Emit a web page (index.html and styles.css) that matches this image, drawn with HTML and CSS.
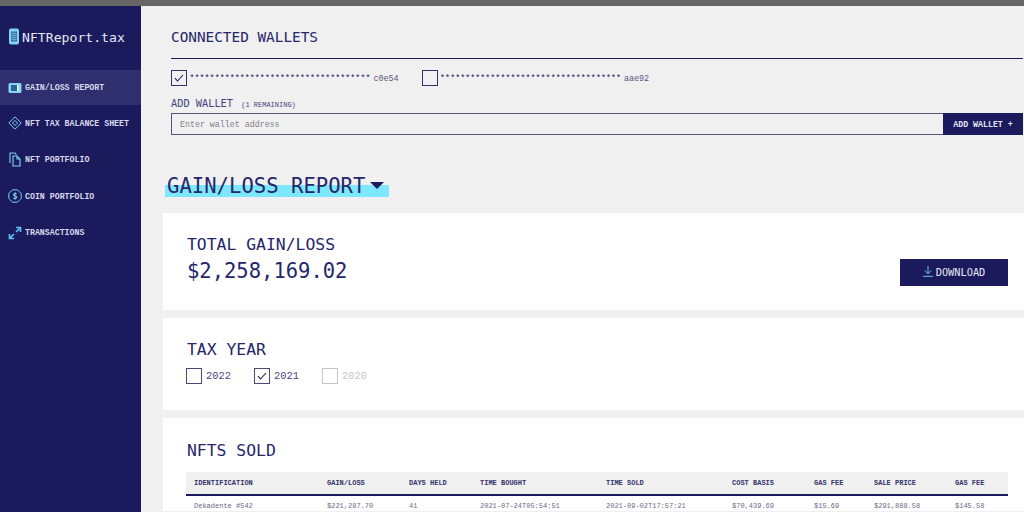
FILE: index.html
```html
<!DOCTYPE html>
<html lang="en">
<head>
<meta charset="utf-8">
<title>NFTReport.tax</title>
<link rel="stylesheet" href="styles.css">
</head>
<body>
<div class="topbar"></div>
<div class="shell">
  <aside class="sidebar">
    <div class="logo">
      <svg class="logo-icon" width="12" height="17" viewBox="0 0 12 17" fill="none"><rect x="1" y="0.5" width="10" height="16" rx="2" fill="#7fd6ee"/><rect x="3" y="3.5" width="6" height="10" fill="#35609a"/><path d="M3 5.5h6M3 7.5h6M3 9.5h6M3 11.5h6M5 3.5v10M7 3.5v10" stroke="#7fd6ee" stroke-width=".5"/></svg>
      <span>NFTReport.tax</span>
    </div>
    <nav class="nav">
      <a class="nav-item active">
        <svg width="14" height="12" viewBox="0 0 14 12" fill="none"><rect x=".5" y="1" width="13" height="10" rx="1.5" fill="#7fd6ee"/><rect x="3" y="3" width="6" height="6" fill="#2d5f9c"/><rect x="9" y="3" width="1.5" height="6" fill="#fff"/></svg>
        <span>GAIN/LOSS REPORT</span>
      </a>
      <a class="nav-item">
        <svg width="14" height="14" viewBox="0 0 14 14" fill="none" stroke="#7fd6ee"><path d="M7 .8 13.2 7 7 13.2.8 7Z"/><path d="M7 4.5 9.5 7 7 9.5 4.5 7Z"/></svg>
        <span>NFT TAX BALANCE SHEET</span>
      </a>
      <a class="nav-item">
        <svg width="14" height="15" viewBox="0 0 14 15" fill="none" stroke="#7fd6ee" stroke-width="1.1"><path d="M2 11V1h5l1.500 2"/><path d="M5 4h4l3 3v7H5Z"/><path d="M9 4v3h3"/></svg>
        <span>NFT PORTFOLIO</span>
      </a>
      <a class="nav-item">
        <svg width="14" height="14" viewBox="0 0 14 14" fill="none" stroke="#7fd6ee"><path d="M4.500.8h5l3.700 3.700v5l-3.700 3.700h-5L.8 9.500v-5Z"/><text x="7" y="10" font-size="8.500" text-anchor="middle" fill="#7fd6ee" stroke="none" font-family="DejaVu Sans Mono">$</text></svg>
        <span>COIN PORTFOLIO</span>
      </a>
      <a class="nav-item">
        <svg width="14" height="14" viewBox="0 0 14 14" fill="none" stroke="#5bbcf0" stroke-width="1.700"><path d="M6 8 1.500 12.500M1.500 8v4.500H6"/><path d="M8 6l4.500-4.500M8 1.500h4.500V6"/></svg>
        <span>TRANSACTIONS</span>
      </a>
    </nav>
  </aside>
  <main class="main">
    <section class="wallets">
      <h2 class="wallets-title">CONNECTED WALLETS</h2>
      <div class="wallet-row">
        <label class="wallet">
          <span class="check dark"><svg width="10" height="8" viewBox="0 0 10 8" fill="none"><path d="M1 4.200 3.500 7 9 1" stroke="#1a1a5c" stroke-width="1.100"/></svg></span>
          <span class="address"><span class="stars">************************************</span><span class="tail">c0e54</span></span>
        </label>
        <label class="wallet">
          <span class="check dark"></span>
          <span class="address"><span class="stars">************************************</span><span class="tail">aae92</span></span>
        </label>
      </div>
      <div class="add-label">ADD WALLET <small>(1 REMAINING)</small></div>
      <form class="add-form">
        <input class="add-input" type="text" placeholder="Enter wallet address">
        <button class="add-button" type="button">ADD WALLET +</button>
      </form>
    </section>
    <div class="report-head">
      <h1 class="report-title">GAIN/LOSS REPORT<span class="caret"></span></h1>
    </div>
    <section class="card total-card">
      <div>
        <h3 class="card-title">TOTAL GAIN/LOSS</h3>
        <div class="amount">$2,258,169.02</div>
      </div>
      <button class="download" type="button">
        <svg width="10" height="11" viewBox="0 0 10 11" fill="none" stroke="#6fc4f0"><path d="M5 0v7.500M1.800 4.500 5 7.800l3.200-3.300M0 10.300h10"/></svg>
        DOWNLOAD
      </button>
    </section>
    <section class="card year-card">
      <h3 class="card-title">TAX YEAR</h3>
      <div class="years">
        <label class="year"><span class="check"></span>2022</label>
        <label class="year"><span class="check"><svg width="10" height="8" viewBox="0 0 10 8" fill="none"><path d="M1 4.200 3.500 7 9 1" stroke="#1a1a5c" stroke-width="1.100"/></svg></span>2021</label>
        <label class="year disabled"><span class="check"></span>2020</label>
      </div>
    </section>
    <section class="card sold-card">
      <h3 class="card-title">NFTS SOLD</h3>
      <div class="table">
        <div class="row head">
          <span>IDENTIFICATION</span><span>GAIN/LOSS</span><span>DAYS HELD</span><span>TIME BOUGHT</span><span>TIME SOLD</span><span>COST BASIS</span><span>GAS FEE</span><span>SALE PRICE</span><span>GAS FEE</span>
        </div>
        <div class="row">
          <span>Dekadente #542</span><span>$221,287.70</span><span>41</span><span>2021-07-24T05:54:51</span><span>2021-09-02T17:57:21</span><span>$70,439.69</span><span>$15.69</span><span>$291,888.58</span><span>$145.58</span>
        </div>
      </div>
    </section>
  </main>
</div>
</body>
</html>
```
FILE: styles.css
```css
* { box-sizing: border-box; }
html, body { margin: 0; height: 100%; overflow: hidden; }
body {
  width: 1024px; height: 512px;
  display: flex; flex-direction: column;
  font-family: "DejaVu Sans Mono", monospace;
  color: #1a1a5c; background: #f0f0f1;
}
.topbar { height: 6px; background: #666; flex: none; }
.shell { flex: 1; display: flex; min-height: 0; }

.sidebar { width: 141px; flex: none; background: #1a1a5c; color: #e6e6f4; }
.logo { height: 64px; padding: 22px 0 0 8px; display: flex; align-items: flex-start; gap: 2px; font-size: 13.150px; line-height: 19px; }
.logo-icon { flex: none; }
.nav { display: flex; flex-direction: column; font-family: "Liberation Mono", monospace; }
.nav-item { height: 36.500px; padding-left: 8px; display: flex; align-items: center; gap: 3px; font-size: 8.250px; font-weight: bold; color: #d8d8ec; }
.nav-item svg { flex: none; }
.nav-item.active { height: 35px; background: #2f2f6f; }

.main { flex: 1; min-width: 0; padding-left: 22px; }
.wallets { padding: 20px 1px 0 8px; }
.wallets-title { margin: 0; font-size: 14.370px; line-height: 23px; font-weight: normal; height: 33px; border-bottom: 1px solid #1a1a5c; color: #26266a; }
.wallet-row { display: flex; gap: 23px; margin-top: 11px; }
.wallet { display: flex; align-items: center; gap: 2.500px; font: 8.400px "Liberation Mono", monospace; color: #55557c; }
.address { padding-top: 2px; }
.tail { margin-left: 3px; }
.stars { color: #1a1a5c; }
.check { width: 16px; height: 16px; flex: none; border: 1px solid #4a4a78; background: #fff; display: flex; align-items: center; justify-content: center; }
.check.dark { background: transparent; border-color: #33336a; }
.add-label { margin-top: 10px; font-size: 10.300px; line-height: 14px; color: #44447a; }
.add-label small { font-family: "Liberation Mono", monospace; font-size: 7px; margin-left: 2px; }
.add-form { display: flex; height: 22px; margin-top: 1px; }
.add-input { flex: 1; min-width: 0; height: 22px; border: 1px solid #55557c; border-right: 0; background: transparent; padding: 0 8px; font: 8.300px "Liberation Mono", monospace; color: #1a1a5c; }
.add-input::placeholder { color: #80808c; opacity: 1; }
.add-button { width: 80px; height: 22px; border: 0; padding: 0; background: #1a1a5c; color: #e6e6f4; font: bold 8.250px "Liberation Mono", monospace; }

.report-head { margin-top: 38px; height: 40px; }
.report-title { display: inline-block; margin: 0 0 0 2px; padding: 0 5px 0 2px; height: 24px; font-size: 20.600px; font-weight: normal; line-height: 27px; white-space: nowrap; background: linear-gradient(transparent 12px, #7de8fb 12px); color: #26266a; }
.caret { display: inline-block; width: 0; height: 0; margin-left: 5px; vertical-align: 4px; border: 7px solid transparent; border-top: 7px solid #1a1a5c; border-bottom: 0; }

.card { background: #fff; padding-left: 24px; margin-bottom: 8px; }
.card-title { margin: 0; font-size: 16.400px; line-height: 22px; font-weight: normal; color: #26266a; }
.total-card { height: 97px; padding: 21px 16px 0 24px; display: flex; justify-content: space-between; }
.amount { font-size: 20.500px; line-height: 26px; margin-top: 2px; color: #26266a; }
.download { width: 108px; height: 27px; margin-top: 25px; padding: 0 0 2px; border: 0; background: #1a1a5c; color: #e6e6f4; display: flex; align-items: center; justify-content: center; gap: 3px; font: 10.300px "DejaVu Sans Mono", monospace; }
.year-card { height: 92px; padding-top: 21px; }
.years { display: flex; gap: 23px; margin-top: 7px; margin-left: -1px; }
.year { display: flex; align-items: center; gap: 4px; font: 10.400px "Liberation Mono", monospace; color: #44447a; }
.year.disabled { color: #c4c4cc; }
.year.disabled .check { border-color: #c4c4cc; }
.sold-card { height: 93px; margin: 1px 0 0; padding: 22px 16px 0 23px; }
.sold-card .card-title { padding-left: 1px; }
.table { margin-top: 10px; }
.row { display: grid; grid-template-columns: 133px 82px 71px 126px 126px 82px 60px 81px 1fr; padding-left: 8px; font: 7px "Liberation Mono", monospace; align-items: center; height: 20px; color: #6a6a84; }
.row.head { height: 24px; background: #f0f0f1; border-bottom: 2px solid #1a1a5c; font-weight: bold; color: #33336a; }
```
